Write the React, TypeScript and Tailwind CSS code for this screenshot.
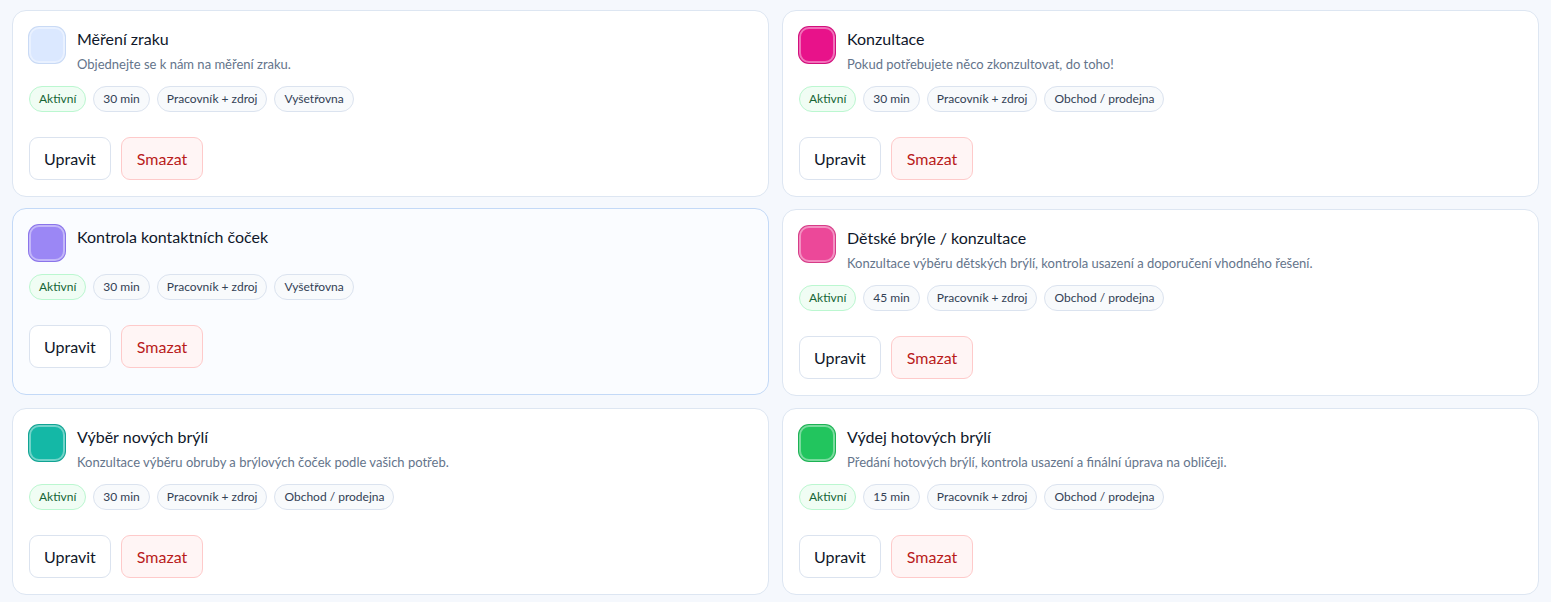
import clsx from 'clsx'

type Service = {
  name: string
  description?: string
  swatch: string
  duration: string
  place: string
  hovered?: boolean
}

const services: Service[] = [
  {
    name: 'Měření zraku',
    description: 'Objednejte se k nám na měření zraku.',
    swatch: 'bg-[#dbe8ff] shadow-[0_0_0_1px_#c9daf5]',
    duration: '30 min',
    place: 'Vyšetřovna',
  },
  {
    name: 'Konzultace',
    description: 'Pokud potřebujete něco zkonzultovat, do toho!',
    swatch: 'bg-[#e8128a] shadow-[0_0_0_1px_#d10f7c]',
    duration: '30 min',
    place: 'Obchod / prodejna',
  },
  {
    name: 'Kontrola kontaktních čoček',
    swatch: 'bg-[#9b87f5] shadow-[0_0_0_1px_#8a74ea]',
    duration: '30 min',
    place: 'Vyšetřovna',
    hovered: true,
  },
  {
    name: 'Dětské brýle / konzultace',
    description: 'Konzultace výběru dětských brýlí, kontrola usazení a doporučení vhodného řešení.',
    swatch: 'bg-[#ec4899] shadow-[0_0_0_1px_#d63c88]',
    duration: '45 min',
    place: 'Obchod / prodejna',
  },
  {
    name: 'Výběr nových brýlí',
    description: 'Konzultace výběru obruby a brýlových čoček podle vašich potřeb.',
    swatch: 'bg-[#14b8a6] shadow-[0_0_0_1px_#10a393]',
    duration: '30 min',
    place: 'Obchod / prodejna',
  },
  {
    name: 'Výdej hotových brýlí',
    description: 'Předání hotových brýlí, kontrola usazení a finální úprava na obličeji.',
    swatch: 'bg-[#22c55e] shadow-[0_0_0_1px_#1cb254]',
    duration: '15 min',
    place: 'Obchod / prodejna',
  },
]

function Badge({ children, tone = 'slate' }: { children: React.ReactNode; tone?: 'green' | 'slate' }) {
  return (
    <span
      className={clsx(
        'inline-flex h-[26px] items-center rounded-full border px-[9px] text-[12px]',
        tone === 'green'
          ? 'border-[#bbf7d0] bg-[#f0fdf4] text-[#166534]'
          : 'border-[#dbe3ef] bg-[#f8fafc] text-[#334155]'
      )}
    >
      {children}
    </span>
  )
}

function ServiceCard({ s }: { s: Service }) {
  return (
    <div
      className={clsx(
        'rounded-[14px] border p-4',
        s.hovered
          ? '-translate-y-px border-[#c3d9f7] bg-[#fafcff]'
          : 'border-[#dde6f2] bg-white'
      )}
    >
      <div className="flex items-start gap-3">
        <div className={clsx('h-9 w-9 shrink-0 rounded-[10px] border-2 border-white/40', s.swatch)} />
        <div className="min-w-0">
          <h3 className="text-[16px] leading-6 text-[#0f172a]">{s.name}</h3>
          {s.description && (
            <p className="mt-1 text-[13px] leading-[18px] text-[#64748b]">{s.description}</p>
          )}
        </div>
      </div>

      <div className="mt-[13px] flex flex-wrap gap-[7px]">
        <Badge tone="green">Aktivní</Badge>
        <Badge>{s.duration}</Badge>
        <Badge>Pracovník + zdroj</Badge>
        <Badge>{s.place}</Badge>
      </div>

      <div className="mt-[25px] flex gap-[10px]">
        <button className="h-[43px] rounded-[9px] border border-[#dbe3ef] bg-white px-[14px] text-[16px] text-[#0f172a]">
          Upravit
        </button>
        <button className="h-[43px] rounded-[9px] border border-[#fecaca] bg-[#fff5f5] px-[15px] text-[16px] text-[#b91c1c]">
          Smazat
        </button>
      </div>
    </div>
  )
}

export default function App() {
  return (
    <div className="min-h-screen bg-[#f5f8fd] px-3 pt-[10px] font-['Lato',sans-serif]">
      <div className="grid grid-cols-2 gap-x-[13px] gap-y-3">
        {services.map((s) => (
          <ServiceCard key={s.name} s={s} />
        ))}
      </div>
    </div>
  )
}
